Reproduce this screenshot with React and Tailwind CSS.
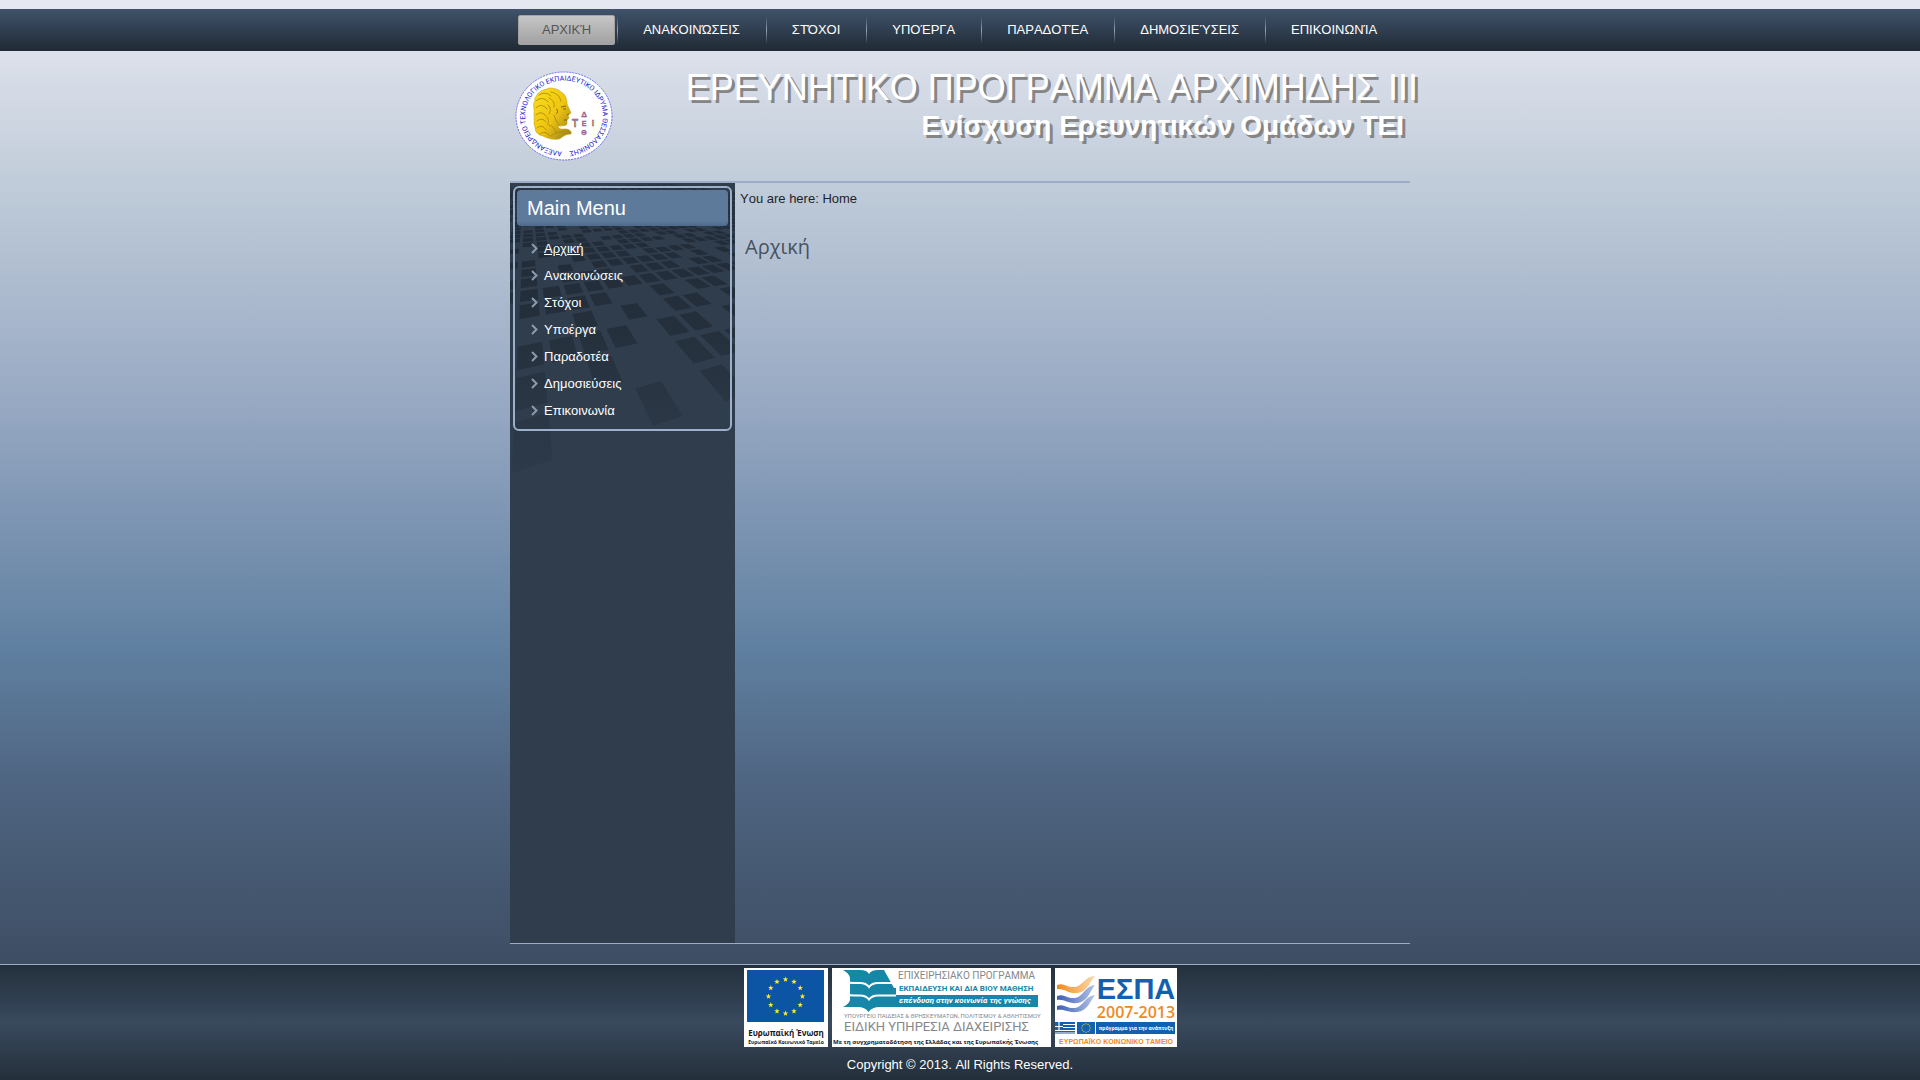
import React from 'react';
import clsx from 'clsx';

const NAV = ['ΑΡΧΙΚΉ', 'ΑΝΑΚΟΙΝΏΣΕΙΣ', 'ΣΤΌΧΟΙ', 'ΥΠΟΈΡΓΑ', 'ΠΑΡΑΔΟΤΈΑ', 'ΔΗΜΟΣΙΕΎΣΕΙΣ', 'ΕΠΙΚΟΙΝΩΝΊΑ'];
const MENU = ['Αρχική', 'Ανακοινώσεις', 'Στόχοι', 'Υποέργα', 'Παραδοτέα', 'Δημοσιεύσεις', 'Επικοινωνία'];

// Near rows of the floor, nearest first: which columns hold a tile
const NEAR_ROWS = [
  [-3, 0, 2],
  [-3, -1, 2, 3, 4],
  [-3, -2, -1, 0, 2, 3, 5],
  [-1, 1, 3, 4, 6],
  [-3, -2, -1, 0, 3, 5, 6],
];

const hasTile = (col, row) => {
  if (row < NEAR_ROWS.length) return NEAR_ROWS[row].includes(col);
  return (((col + 20) * 7 + row * 13 + (col + 20) * row * 3) % 11) > 2;
};

// m and n are the slopes towards the two vanishing points
const project = (m, n) => {
  const depth = 2720 / (m + n);
  return `${(80 + m * depth).toFixed(1)} ${(depth - 30).toFixed(1)}`;
};

const buildFloor = () => {
  let d = '';
  for (let row = 0; row < 50; row++) {
    for (let col = -10; col < 40; col++) {
      if (!hasTile(col, row)) continue;
      const m = 0.485 + col * 0.178;
      const n = 3.57 + row * 0.735;
      if (m + n < 1 || 80 + m * (2720 / (m + n)) > 720) continue;
      d += `M${project(m, n)}L${project(m + 0.137, n)}L${project(m + 0.137, n - 0.58)}L${project(m, n - 0.58)}Z`;
    }
  }
  return d;
};

const FLOOR = buildFloor();

const starPoints = (cx, cy, r) =>
  Array.from({ length: 10 }, (_, i) => {
    const a = (Math.PI / 5) * i - Math.PI / 2;
    const rad = i % 2 ? r * 0.4 : r;
    return `${(cx + rad * Math.cos(a)).toFixed(2)},${(cy + rad * Math.sin(a)).toFixed(2)}`;
  }).join(' ');

const Stars = ({ cx, cy, ring, r }) =>
  Array.from({ length: 12 }, (_, i) => {
    const a = (Math.PI / 6) * i;
    return <polygon key={i} points={starPoints(cx + ring * Math.sin(a), cy - ring * Math.cos(a), r)} fill="#ffe92e" />;
  });

const FloorPattern = () => (
  <svg viewBox="30 24 675 876" className="absolute inset-x-0 top-0 w-full" aria-hidden="true">
    <defs>
      <linearGradient id="floor" gradientUnits="userSpaceOnUse" x1="0" y1="24" x2="0" y2="880">
        <stop offset="0" stopColor="#1c2430" stopOpacity="0.75" />
        <stop offset="0.5" stopColor="#1f2833" stopOpacity="0.65" />
        <stop offset="1" stopColor="#26303c" stopOpacity="0.25" />
      </linearGradient>
    </defs>
    <path d={FLOOR} fill="url(#floor)" />
  </svg>
);

const TeiLogo = () => (
  <svg width="98" height="90" viewBox="0 0 98 90" role="img" aria-label="ΤΕΙ">
    <defs>
      <path id="ring" d="M47 80.500 A39 35.500 0 1 1 51 80.500" />
      <linearGradient id="gold" x1="0" y1="0" x2="1" y2="1">
        <stop offset="0" stopColor="#fbe01a" />
        <stop offset="0.55" stopColor="#efc410" />
        <stop offset="1" stopColor="#8f7a1c" />
      </linearGradient>
    </defs>
    <ellipse cx="49" cy="45" rx="48" ry="44" fill="#fff" stroke="#6a6af0" strokeWidth="1" strokeDasharray="2 1" />
    <text fontFamily="Roboto" fontSize="7" fill="#2020d0">
      <textPath href="#ring">ΑΛΕΞΑΝΔΡΕΙΟ ΤΕΧΝΟΛΟΓΙΚΟ ΕΚΠΑΙΔΕΥΤΙΚΟ ΙΔΡΥΜΑ ΘΕΣΣΑΛΟΝΙΚΗΣ</textPath>
    </text>
    <path
      d="M22 24C26 18 31 19 34 17C39 17 43 18 46 21C50 23 52 27 52 33L56 42L53 44L54 47L52 49L52 53C50 56 46 54 43 55C44 59 47 58 50 58C54 58 57 60 56 63C50 63 48 66 44 68C37 69 32 67 28 65C23 64 20 61 20 56C18 52 20 47 19 43C20 38 17 33 20 30C19 27 21 26 22 24Z"
      fill="url(#gold)"
      stroke="#c79f12"
      strokeWidth="0.6"
    />
    <path
      d="M24 24c4-3 9-2 12 1M36 21c5 1 9 4 10 9M21 30c4-4 9-3 12 1M34 27c4 2 6 5 5 9M21 37c3-4 8-3 11 1M33 34c3 3 3 6 1 9M21 44c3-3 7-3 10 1M22 50c3-3 7-2 9 1M22 57c3-3 7-2 9 2M25 63c3-3 7-2 10 2M32 46c2 3 2 6 0 8M34 54c4 1 6 4 7 8M36 65c4-3 8-5 14-4M39 44c1 4 3 8 6 11"
      fill="none"
      stroke="#a88a12"
      strokeWidth="0.9"
      strokeLinecap="round"
    />
    <path d="M46 36l5-1M48 38h3M52 44l2-1M49 49h3M41 38c2 0 2 4 0 5" stroke="#6f5a14" strokeWidth="0.9" fill="none" />
    <g fontFamily="Liberation Sans" fontWeight="700" fill="#e8743c" stroke="#4b4bd0" strokeWidth="0.3" textAnchor="middle">
      <text x="60" y="56" fontSize="10">Τ</text>
      <text x="69" y="46" fontSize="8">Δ</text>
      <text x="69" y="55" fontSize="7">Ε</text>
      <text x="78" y="55" fontSize="9">Ι</text>
      <text x="69" y="64" fontSize="7">Θ</text>
    </g>
  </svg>
);

const EuLogo = () => (
  <svg width="84" height="79" viewBox="0 0 84 79" role="img" aria-label="Ευρωπαϊκή Ένωση">
    <rect width="84" height="79" fill="#fff" />
    <rect x="3" y="2" width="77" height="52" fill="#0c55a5" />
    <Stars cx={41.5} cy={28.5} ring={17} r={2.9} />
    <g fontFamily="Open Sans" fontWeight="700" fill="#15151f" textAnchor="middle">
      <text x="42" y="68" fontSize="8">Ευρωπαϊκή Ένωση</text>
      <text x="42" y="76" fontSize="5">Ευρωπαϊκό Κοινωνικό Ταμείο</text>
    </g>
  </svg>
);

const EducationLogo = () => (
  <svg width="219" height="79" viewBox="0 0 219 79" role="img" aria-label="Εκπαίδευση και Δια Βίου Μάθηση">
    <rect width="219" height="79" fill="#fff" />
    <path
      d="M11 2H28Q35 2 37 6Q39 2 46 2H52L62 20H64V27H206V39H48Q40 39 36.500 44Q33 39 26 39H11Q17 36 18 32V10Q17 5 11 2Z"
      fill="#1687a6"
    />
    <path d="M12 14q3 1 16 1q6 0 9 4q3-4 9-4h14M12 26.500q3 1 16 1q6 0 9 4q3-4 9-4h18" fill="none" stroke="#fff" strokeWidth="2" />
    <g fontFamily="Roboto" fill="#85888b">
      <text x="66" y="11" fontSize="10">ΕΠΙΧΕΙΡΗΣΙΑΚΟ ΠΡΟΓΡΑΜΜΑ</text>
      <text x="67" y="23" fontSize="8" fontWeight="700" fill="#1687a6">ΕΚΠΑΙΔΕΥΣΗ ΚΑΙ ΔΙΑ ΒΙΟΥ ΜΑΘΗΣΗ</text>
      <text x="67" y="35" fontSize="8" fontWeight="700" fontStyle="italic" fill="#fff">επένδυση στην κοινωνία της γνώσης</text>
      <text x="12" y="50" fontSize="6">ΥΠΟΥΡΓΕΙΟ ΠΑΙΔΕΙΑΣ &amp; ΘΡΗΣΚΕΥΜΑΤΩΝ, ΠΟΛΙΤΙΣΜΟΥ &amp; ΑΘΛΗΤΙΣΜΟΥ</text>
      <text x="12" y="63" fontSize="13">ΕΙΔΙΚΗ ΥΠΗΡΕΣΙΑ ΔΙΑΧΕΙΡΙΣΗΣ</text>
    </g>
    <text x="1" y="76" fontFamily="Open Sans" fontWeight="700" fontSize="6" fill="#15151f">
      Με τη συγχρηματοδότηση της Ελλάδας και της Ευρωπαϊκής Ένωσης
    </text>
  </svg>
);

const EspaLogo = () => (
  <svg width="122" height="79" viewBox="0 0 122 79" role="img" aria-label="ΕΣΠΑ 2007-2013">
    <defs>
      <linearGradient id="waveOrange">
        <stop offset="0" stopColor="#f08a1d" />
        <stop offset="1" stopColor="#fbd9ad" />
      </linearGradient>
      <linearGradient id="waveBlue">
        <stop offset="0" stopColor="#3b5fb5" />
        <stop offset="1" stopColor="#b4c3e6" />
      </linearGradient>
    </defs>
    <rect width="122" height="79" fill="#fff" />
    <path d="M2 17C9 14 12 20 20 19C28 18 30 8 40 8C35 13 33 24 22 25C13 26 10 20 2 21Z" fill="url(#waveOrange)" />
    <path d="M2 28C9 25 12 31 20 30C28 29 30 18 40 17C35 23 33 34 22 35C13 36 10 31 2 32Z" fill="url(#waveBlue)" />
    <path d="M2 38C9 35 12 41 20 40C28 39 30 28 40 27C35 33 33 43 22 44C13 45 10 41 2 42Z" fill="url(#waveBlue)" />
    <rect y="54" width="20" height="12" fill="#1260ae" />
    <path d="M8 56.500h12M8 59.500h12M0 62.500h20M0 65h20M0 58.500h8M4 54v8" stroke="#fff" strokeWidth="1.2" />
    <rect x="22" y="54" width="18" height="12" fill="#1260ae" />
    <Stars cx={31} cy={60} ring={4.2} r={0.9} />
    <rect x="41" y="54" width="79" height="12" fill="#1260ae" />
    <g fontFamily="Liberation Sans" fontWeight="700" textAnchor="middle">
      <text x="81" y="31" fontSize="29" fill="#1260ae">ΕΣΠΑ</text>
      <text x="81" y="50" fontSize="16" fontFamily="Open Sans" fontWeight="600" fill="#f08a1d">2007-2013</text>
      <text x="81" y="62" fontSize="5" fontFamily="Open Sans" fill="#fff">πρόγραμμα για την ανάπτυξη</text>
      <text x="61" y="76" fontSize="7" fill="#f08a1d">ΕΥΡΩΠΑΪΚΟ ΚΟΙΝΩΝΙΚΟ ΤΑΜΕΙΟ</text>
    </g>
  </svg>
);

const Chevron = () => (
  <svg width="7" height="11" viewBox="0 0 7 11" fill="none" stroke="#8d9cad" strokeWidth="2" aria-hidden="true">
    <path d="M1 1l4.500 4.500L1 10" />
  </svg>
);

export default function App() {
  return (
    <div className="min-h-screen flex flex-col pt-[9px] font-['Liberation_Sans',sans-serif] [font-kerning:none] text-[13px] leading-4 bg-[linear-gradient(to_bottom,#e6e9f1_0%,#d5dbe6_8%,#c0ccd9_17%,#98a9c3_37%,#6080a1_60%,#4e6480_73%,#3e4e64_89%,#3e4e64_100%)]">
      <nav className="h-[42px] bg-linear-to-b from-[#40536b] to-[#202a35]">
        <ul className="max-w-[900px] h-full mx-auto pl-2 flex items-center">
          {NAV.map((label, i) => (
            <li key={label} className="flex items-center">
              {i > 0 && <span className="w-px h-7 bg-linear-to-b from-transparent via-[#93a3b8] to-transparent" />}
              <a
                href="#"
                className={clsx(
                  'h-[30px] flex items-center whitespace-nowrap',
                  i === 0
                    ? 'px-[23px] mr-[2px] rounded-xs border border-[#a3a3a3] bg-linear-to-b from-[#c6c6c6] to-[#a2a2a2] text-[#555]'
                    : 'pl-[25px] pr-[26px] text-white'
                )}
              >
                {label}
              </a>
            </li>
          ))}
        </ul>
      </nav>

      <div className="w-full max-w-[900px] mx-auto flex-1 flex flex-col">
        <header className="h-[130px] shrink-0 flex justify-between pl-[5px]">
          <a href="#" className="pt-5">
            <TeiLogo />
          </a>
          <div className="pt-[17px] -mr-2 text-right text-white whitespace-nowrap [text-shadow:3px_3px_0_#858585]">
            <h1 className="text-[36px] leading-10">ΕΡΕΥΝΗΤΙΚΟ ΠΡΟΓΡΑΜΜΑ ΑΡΧΙΜΗΔΗΣ ΙΙΙ</h1>
            <h2 className="pr-[14px] text-[28px] leading-9 font-bold">Ενίσχυση Ερευνητικών Ομάδων ΤΕΙ</h2>
          </div>
        </header>

        <div className="flex-1 flex mb-5 border-t-2 border-b border-t-[#9cacc6] border-b-[#9cacc6]">
          <aside className="relative w-[225px] shrink-0 p-[3px] bg-[#2f3d4d] overflow-hidden">
            <FloorPattern />
            <div className="relative border-2 border-[#9cafcb] rounded-md p-[2px]">
              <h3 className="h-9 px-[10px] flex items-center rounded-[4px] bg-linear-to-b from-[#5d7a9b] from-85% to-[#50698a] text-white text-[20px]">
                Main Menu
              </h3>
              <ul className="pt-[9px] pb-[3px] pl-[14px]">
                {MENU.map((label, i) => (
                  <li key={label} className="h-[27px] flex items-center gap-[6px]">
                    <Chevron />
                    <a href="#" className={clsx('text-white', i === 0 && 'underline')}>
                      {label}
                    </a>
                  </li>
                ))}
              </ul>
            </div>
          </aside>

          <main className="flex-1 pl-[5px] pt-2 text-[#1d242c]">
            <p>
              You are here: <span>Home</span>
            </p>
            <h2 className="pl-[5px] pt-[26px] font-['Open_Sans',sans-serif] text-[20px] leading-7 text-[#47525f]">Αρχική</h2>
          </main>
        </div>
      </div>

      <footer className="h-[116px] shrink-0 border-t border-[#9cacc6] pt-[3px] flex flex-col items-center bg-linear-to-b from-[#24303c] via-[#394a5e] to-[#242f3b] text-white">
        <div className="flex gap-1">
          <EuLogo />
          <EducationLogo />
          <EspaLogo />
        </div>
        <p className="pt-[10px]">Copyright © 2013. All Rights Reserved.</p>
      </footer>
    </div>
  );
}
